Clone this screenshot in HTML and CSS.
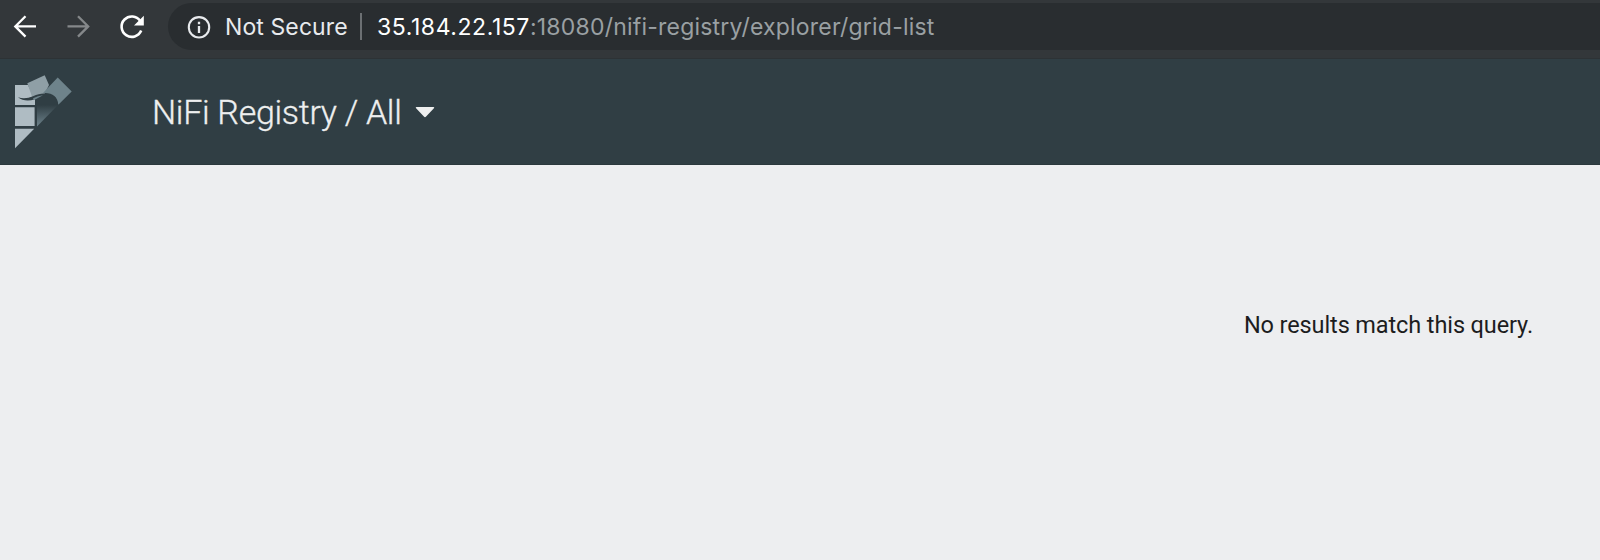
FILE: index.html
```html
<!DOCTYPE html>
<html lang="en">
<head>
<meta charset="utf-8">
<title>NiFi Registry</title>
<link rel="stylesheet" href="styles.css">
</head>
<body>
<div class="toolbar">
  <svg class="nav" width="160" height="54" viewBox="0 0 160 54" fill="none" stroke-width="2.3">
    <path d="M36 26.4H15.5M25.5 16.2L15.3 26.4L25.5 36.6" stroke="#fff"/>
    <path d="M67.5 26.4H88M78 16.2L88.2 26.4L78 36.6" stroke="#85888a"/>
    <path d="M140.2 20.9A10.2 10.2 0 1 0 141.2 30.6" stroke="#fff" stroke-width="2.6"/>
    <path d="M143.8 15.8V25.6H134Z" fill="#fff"/>
  </svg>
  <div class="address">
    <svg class="info" width="24" height="24" viewBox="0 0 24 24" fill="none">
      <circle cx="12" cy="12.3" r="10.2" stroke="#e8eaed" stroke-width="2.1"/>
      <path d="M12 11.1V17.9M12 6.8V9.3" stroke="#e8eaed" stroke-width="2.3"/>
    </svg>
    <span class="security">Not Secure</span>
    <span class="divider"></span>
    <span class="host">35.184.22.157</span><span class="path">:18080/nifi-registry/explorer/grid-list</span>
  </div>
</div>
<header class="header">
  <svg class="logo" width="58" height="74" viewBox="15 75 58 74">
    <defs><linearGradient id="shade" x1="0" y1="105" x2="0" y2="126" gradientUnits="userSpaceOnUse"><stop offset="0" stop-color="#303e44"/><stop offset="1" stop-color="#6b8089"/></linearGradient></defs>
    <path d="M15 85H28L33 95L35 99V105H15Z" fill="#afbcc3"/>
    <path d="M27.3 83.3L44.7 75.3L49 85L44 95L32.5 98Z" fill="#8f9fa6"/>
    <path d="M57.7 77.5L71.7 91.4L58.3 104.7Q57 92 43 93Z" fill="#6e838b"/>
    <path d="M18 97.3Q25.5 99.5 33 96.2C39 93.6 44 92.5 49 94.3Q56.5 97 58.3 104.7L57 106H35V99.2Q25 102.6 18 97.3Z" fill="#303e44"/>
    <path d="M33 98.3Q38 95.5 43 95.2L37 98.5L34 100Z" fill="#6e838b"/>
    <path d="M15 107.3H34.6V126H15ZM15 128.7H34.2L15 148.2Z" fill="#afbcc3"/>
    <path d="M37 105H58L37 126.4Z" fill="url(#shade)"/>
  </svg>
  <span class="title">NiFi Registry / All</span>
  <svg class="caret" width="20" height="12" viewBox="0 0 20 12"><path d="M1.8 1H18.2Q20 1 18.7 2.4L11.1 10.6Q10 11.7 8.9 10.6L1.3 2.4Q0 1 1.8 1Z" fill="#eeefef"/></svg>
</header>
<main class="content"><p class="message">No results match this query.</p></main>
</body>
</html>
```
FILE: styles.css
```css
body {
  margin: 0;
  height: 560px;
  display: flex;
  flex-direction: column;
  overflow: hidden;
  background: #edeef0;
}
svg { display: block; flex: none; }
.toolbar {
  box-sizing: border-box;
  height: 59px;
  padding-top: 3px;
  display: flex;
  background: #33373a;
  border-bottom: 1px solid #2d3235;
}
.nav { margin-top: -3px; }
.address {
  box-sizing: border-box;
  height: 47px;
  flex: 1;
  margin-left: 8px;
  padding-left: 19px;
  display: flex;
  align-items: center;
  background: #292d30;
  border-radius: 24px 0 0 24px;
  font: 23px/47px Inter, sans-serif;
  white-space: nowrap;
}
.security, .host, .path { padding-top: 2px; }
.security { width: 122px; margin-left: 14px; color: #e8eaed; letter-spacing: 0.1px; }
.divider { width: 2px; height: 27px; margin: 0 15px 0 13px; background: #6c7073; }
.host { color: #fff; letter-spacing: 0.57px; }
.path { color: #9aa0a3; letter-spacing: 0.21px; }
.header {
  box-sizing: border-box;
  height: 106px;
  padding: 1px 0 0 15px;
  display: flex;
  align-items: center;
  background: #303e44;
  border-bottom: 1px solid #2b383d;
}
.title {
  width: 250px;
  margin-left: 79px;
  color: #eeefef;
  font: 300 34px/40px Roboto, sans-serif;
  letter-spacing: -0.3px;
  -webkit-text-stroke: 0.3px #eeefef;
  white-space: nowrap;
}
.caret { margin-left: 13px; }
.content { flex: 1; display: flex; justify-content: flex-end; }
.message {
  margin: 146px 67px 0 0;
  color: #1d1d1e;
  font: 23.5px/28px Roboto, sans-serif;
  letter-spacing: -0.11px;
}
```
